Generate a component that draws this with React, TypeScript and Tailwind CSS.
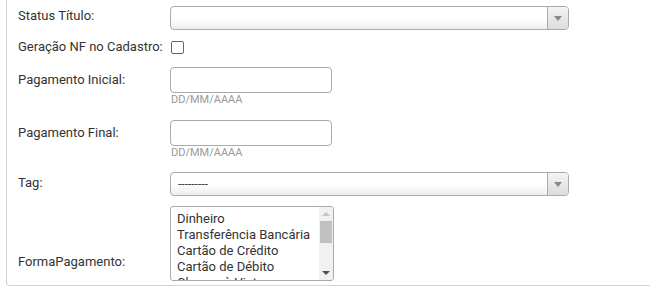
import React from 'react';

const font = { fontFamily: 'Roboto, "Liberation Sans", sans-serif' };

const Label: React.FC<{ text: string; className?: string }> = ({ text, className = '' }) => (
  <div className={`w-[152px] shrink-0 text-[13px] leading-[16px] text-[#333] ${className}`}>{text}</div>
);

const Select: React.FC<{ value?: string }> = ({ value = '' }) => (
  <div className="flex h-[24px] w-[399px] rounded-[4px] border border-[#aaa] bg-gradient-to-b from-white from-50% to-[#eee] overflow-hidden">
    <div className="flex-1 pl-[7px] text-[12px] leading-[22px] text-[#444]">{value}</div>
    <div className="flex w-[21px] items-center justify-center border-l border-[#aaa] bg-gradient-to-b from-[#f4f4f4] to-[#dcdcdc]">
      <div className="h-0 w-0 border-x-[4px] border-t-[5px] border-x-transparent border-t-[#888]" />
    </div>
  </div>
);

const DateField: React.FC = () => (
  <div className="flex flex-col">
    <div className="h-[26px] w-[162px] rounded-[4px] border border-[#aaa] bg-white" />
    <div className="h-[14px] pl-[1px] text-[11px] leading-[14px] text-[#999]">DD/MM/AAAA</div>
  </div>
);

const formas = ['Dinheiro', 'Transferência Bancária', 'Cartão de Crédito', 'Cartão de Débito', 'Cheque à Vista'];

const ListBox: React.FC = () => (
  <div className="flex h-[75px] w-[164px] rounded-[3px] border border-[#aaa] bg-white overflow-hidden">
    <div className="flex-1 overflow-hidden pl-[6px] pt-[4px]">
      {formas.map((f) => (
        <div key={f} className="whitespace-nowrap text-[13px] leading-[16px] text-[#333]">{f}</div>
      ))}
    </div>
    <div className="flex w-[14px] flex-col items-center bg-[#f1f1f1]">
      <div className="flex h-[14px] items-center justify-center">
        <div className="h-0 w-0 border-x-[4px] border-b-[4px] border-x-transparent border-b-[#c4c4c4]" />
      </div>
      <div className="h-[22px] w-[12px] bg-[#c1c1c1]" />
      <div className="flex-1" />
      <div className="flex h-[14px] items-center justify-center">
        <div className="h-0 w-0 border-x-[4px] border-t-[4px] border-x-transparent border-t-[#505050]" />
      </div>
    </div>
  </div>
);

const App: React.FC = () => {
  return (
    <div className="h-[292px] w-[650px] overflow-hidden bg-white" style={font}>
      <div className="ml-[6px] w-[700px] rounded-bl-[4px] border-b border-l border-[#d4d4d4] pb-[4px] pl-[11px] pt-[6px]">
        <div className="flex">
          <Label text="Status Título:" className="pt-[2px]" />
          <Select />
        </div>
        <div className="mt-[10px] flex h-[14px] items-center">
          <div className="text-[13px] leading-[16px] text-[#333]">Geração NF no Cadastro:</div>
          <div className="ml-[8px] mt-[1px] h-[13px] w-[13px] rounded-[2px] border border-[#666] bg-white" />
        </div>
        <div className="mt-[13px] flex">
          <Label text="Pagamento Inicial:" className="pt-[5px]" />
          <DateField />
        </div>
        <div className="mt-[13px] flex">
          <Label text="Pagamento Final:" className="pt-[5px]" />
          <DateField />
        </div>
        <div className="mt-[12px] flex">
          <Label text="Tag:" className="pt-[3px]" />
          <Select value="---------" />
        </div>
        <div className="mt-[10px] flex items-end">
          <Label text="FormaPagamento:" className="pb-[11px]" />
          <ListBox />
        </div>
      </div>
    </div>
  );
};

export default App;
